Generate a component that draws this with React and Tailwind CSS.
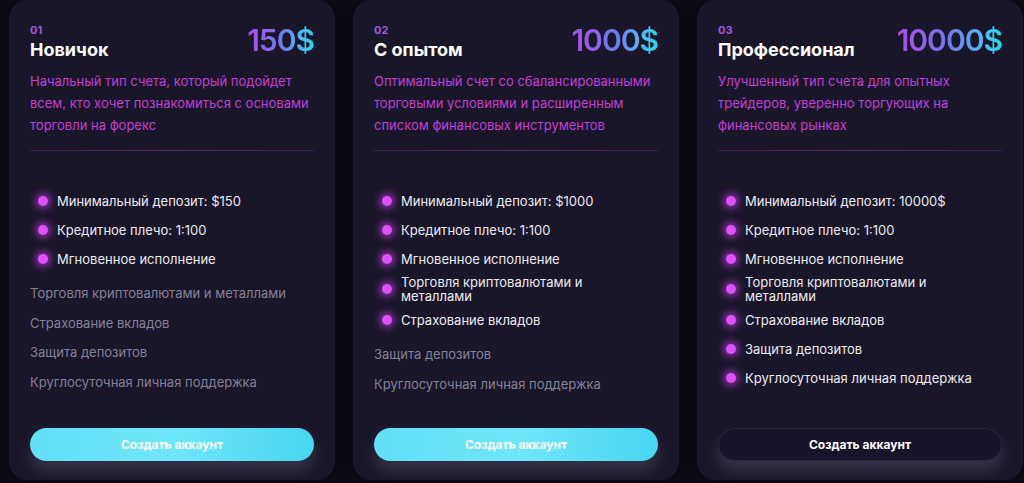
import React from "react";

const plans = [
  {
    num: "01",
    title: "Новичок",
    price: "150$",
    desc: ["Начальный тип счета, который подойдет", "всем, кто хочет познакомиться с основами", "торговли на форекс"],
    on: [["Минимальный депозит: $150"], ["Кредитное плечо: 1:100"], ["Мгновенное исполнение"]],
    off: ["Торговля криптовалютами и металлами", "Страхование вкладов", "Защита депозитов", "Круглосуточная личная поддержка"],
    dark: false,
  },
  {
    num: "02",
    title: "С опытом",
    price: "1000$",
    desc: ["Оптимальный счет со сбалансированными", "торговыми условиями и расширенным", "списком финансовых инструментов"],
    on: [["Минимальный депозит: $1000"], ["Кредитное плечо: 1:100"], ["Мгновенное исполнение"], ["Торговля криптовалютами и", "металлами"], ["Страхование вкладов"]],
    off: ["Защита депозитов", "Круглосуточная личная поддержка"],
    dark: false,
  },
  {
    num: "03",
    title: "Профессионал",
    price: "10000$",
    desc: ["Улучшенный тип счета для опытных", "трейдеров, уверенно торгующих на", "финансовых рынках"],
    on: [["Минимальный депозит: 10000$"], ["Кредитное плечо: 1:100"], ["Мгновенное исполнение"], ["Торговля криптовалютами и", "металлами"], ["Страхование вкладов"], ["Защита депозитов"], ["Круглосуточная личная поддержка"]],
    off: [],
    dark: true,
  },
];

function Card({ p }) {
  return (
    <div className="w-[326px] h-[480px] shrink-0 rounded-[18px] bg-[#1a1629] pt-[24px] px-[21px] pb-[19px] flex flex-col shadow-[0_0_12px_rgba(0,0,0,0.5)]">
      <div className="flex justify-between items-start">
        <div className="flex flex-col">
          <span className="text-[11px] font-bold leading-[12px] text-[#9f57dd]">{p.num}</span>
          <span className="text-[18px] font-bold leading-[24px] text-white mt-[2px]">{p.title}</span>
        </div>
        <span className="text-[30px] font-semibold leading-[32px] tracking-[-1px] bg-gradient-to-r from-[#a84ae2] via-[#6f78f0] to-[#1fd8ee] bg-clip-text text-transparent">
          {p.price}
        </span>
      </div>
      <p className="mt-[8px] text-[13px] leading-[22px] text-[#c13fd8] whitespace-nowrap">
        {p.desc.map((l, i) => (
          <React.Fragment key={i}>
            {l}
            {i < p.desc.length - 1 && <br />}
          </React.Fragment>
        ))}
      </p>
      <div className="mt-[14px] h-px bg-gradient-to-r from-[#3b1e52] via-[#5a2770] to-[#3b1e52]" />
      <div className="mt-[35px] flex flex-col">
        {p.on.map((t) => (
          <div key={t[0]} className={"flex items-center min-h-[29px] pl-[8px] " + (t.length > 1 ? "py-[2px]" : "")}>
            <span className="w-[10px] h-[10px] rounded-full bg-[#dc52f7] shadow-[0_0_7px_3px_rgba(200,60,240,0.6)] shrink-0" />
            <span className="ml-[9px] text-[13px] leading-[14px] text-[#ecebf3]">
              {t.map((l, i) => (
                <React.Fragment key={i}>
                  {l}
                  {i < t.length - 1 && <br />}
                </React.Fragment>
              ))}
            </span>
          </div>
        ))}
        {p.off.map((t, i) => (
          <div key={t} className={"flex items-center min-h-[29.5px] text-[13px] text-[#85809a] " + (i === 0 ? "mt-[6px]" : "")}>
            {t}
          </div>
        ))}
      </div>
      <div className="mt-auto">
        {p.dark ? (
          <button className="w-full h-[33px] rounded-full bg-[#17132a] border border-[#2a2540] text-[12px] font-bold text-white shadow-[0_10px_16px_rgba(190,200,240,0.16)]">
            Создать аккаунт
          </button>
        ) : (
          <button className="w-full h-[33px] rounded-full bg-gradient-to-r from-[#62def6] via-[#6fe6f8] to-[#47d6f2] text-[12px] font-bold text-white shadow-[0_10px_16px_rgba(190,200,240,0.16)]">
            Создать аккаунт
          </button>
        )}
      </div>
    </div>
  );
}

export default function App() {
  return (
    <div className="w-[1024px] h-[483px] overflow-hidden bg-[#0e0b17] flex gap-[18px] pl-[9px] pt-0" style={{ fontFamily: "Inter, 'Noto Sans', sans-serif" }}>
      {plans.map((p) => (
        <Card key={p.num} p={p} />
      ))}
    </div>
  );
}
